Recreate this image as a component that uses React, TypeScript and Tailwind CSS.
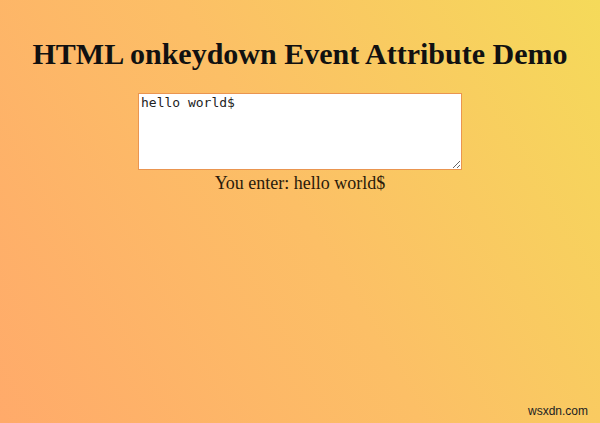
export default function App() {
  return (
    <div className="w-[600px] h-[423px] relative overflow-hidden bg-[linear-gradient(60deg,#ffaa6a_0%,#fcbf66_50%,#f5da5a_100%)] font-['Liberation_Serif',serif] text-[#111]">
      <h1 className="pt-[37px] text-center text-[30px] font-bold leading-[34px]">
        HTML onkeydown Event Attribute Demo
      </h1>
      <div className="mt-[22px] flex flex-col items-center">
        <textarea
          defaultValue="hello world$"
          className="block w-[324px] h-[77px] bg-white border border-[#ea9550] px-[2px] py-[1px] font-['DejaVu_Sans_Mono',monospace] text-[13px] leading-[16px] text-[#222] outline-none resize"
        />
        <p className="mt-[2px] text-[18px] leading-[22px] text-[#2a1a0a]">You enter: hello world$</p>
      </div>
      <span className="absolute right-[12px] bottom-[3px] font-['Liberation_Sans',sans-serif] text-[12px] text-[#222]">
        wsxdn.com
      </span>
    </div>
  );
}
